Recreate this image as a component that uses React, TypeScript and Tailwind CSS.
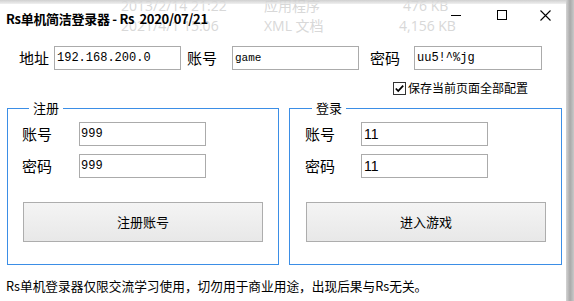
import React from "react";

function Box({ w, children, cls }: { w: string; children: React.ReactNode; cls: string }) {
  return (
    <div className={`${w} h-[24px] border border-[#ababab] bg-white flex items-center pl-[2px] text-black ${cls}`}>
      {children}
    </div>
  );
}

function Group({
  title,
  width,
  labelPl,
  inputMl,
  user,
  pass,
  valueCls,
  button,
}: {
  title: string;
  width: string;
  labelPl: string;
  inputMl: string;
  user: string;
  pass: string;
  valueCls: string;
  button: string;
}) {
  return (
    <fieldset className={`${width} h-[165px] border border-[#3b8ee6] ${labelPl} pb-[22px]`}>
      <legend className="ml-[7px] px-[4px] text-[13px] leading-[16px] text-black">{title}</legend>
      <div className="flex flex-col">
        <div className="mt-[6px] flex items-center h-[24px]">
          <span className="w-[57px] text-[15px] leading-[24px]">账号</span>
          <div className={`${inputMl} w-[127px] h-[24px] border border-[#ababab] bg-white flex items-center pl-[1px] ${valueCls}`}>{user}</div>
        </div>
        <div className="mt-[8px] flex items-center h-[24px]">
          <span className="w-[57px] text-[15px] leading-[24px]">密码</span>
          <div className={`${inputMl} w-[127px] h-[24px] border border-[#ababab] bg-white flex items-center pl-[1px] ${valueCls}`}>{pass}</div>
        </div>
        <div className="mt-[24px] ml-[1px] w-[240px] h-[40px] border border-[#adadad] bg-gradient-to-b from-[#f4f4f4] to-[#e8e8e8] flex items-center justify-center text-[13px] text-black">
          {button}
        </div>
      </div>
    </fieldset>
  );
}

export default function App() {
  return (
    <div className="relative w-[574px] h-[301px] overflow-hidden bg-white flex font-['Noto_Sans_CJK_SC','Noto_Sans',sans-serif] text-black">
      {/* ghost text from the window behind */}
      <div className="absolute left-0 top-0 w-[566px] h-[40px] font-['Open_Sans','Noto_Sans_CJK_SC',sans-serif] text-[14px] leading-[18px] text-[#d8d8d8]">
        <div className="absolute left-[121px] top-[-3px]">2013/2/14 21:22</div>
        <div className="absolute left-[264px] top-[-3px]">应用程序</div>
        <div className="absolute left-[403px] top-[-3px]">476 KB</div>
        <div className="absolute left-[121px] top-[17px]">2021/4/1 15:06</div>
        <div className="absolute left-[264px] top-[17px]">XML 文档</div>
        <div className="absolute left-[399px] top-[17px]">4,156 KB</div>
      </div>
      <div className="absolute left-0 top-0 w-[574px] h-[4px] bg-gradient-to-b from-[#c4c4c4] to-[#ececec] opacity-80" />

      <div className="relative w-[566px] h-full flex flex-col">
        {/* title bar */}
        <div className="h-[32px] flex items-start">
          <div className="pl-[6px] pt-[11px] text-[13px] leading-[16px] font-bold whitespace-pre tracking-[-0.3px]">
            Rs单机简洁登录器 - Rs  2020/07/21
          </div>
          <div className="ml-auto flex h-[30px]">
            <div className="w-[46px] h-[30px] flex items-center justify-center">
              <svg width="10" height="10" viewBox="0 0 10 10">
                <line x1="0" y1="5.5" x2="10" y2="5.5" stroke="#000" strokeWidth="1" />
              </svg>
            </div>
            <div className="w-[45px] h-[30px] flex items-center justify-center">
              <svg width="10" height="10" viewBox="0 0 10 10">
                <rect x="0.5" y="0.5" width="9" height="9" fill="none" stroke="#000" strokeWidth="1" />
              </svg>
            </div>
            <div className="w-[42px] h-[30px] flex items-center justify-center">
              <svg width="11" height="11" viewBox="0 0 11 11">
                <path d="M0.5 0.5 L10.5 10.5 M10.5 0.5 L0.5 10.5" stroke="#000" strokeWidth="1.1" fill="none" />
              </svg>
            </div>
          </div>
        </div>

        {/* row 1 */}
        <div className="mt-[14px] flex items-center h-[24px] pl-[19px]">
          <span className="w-[35px] text-[15px] leading-[24px]">地址</span>
          <Box w="w-[127px]" cls="font-['Liberation_Mono',monospace] text-[12px]">192.168.200.0</Box>
          <span className="ml-[6px] w-[45px] text-[15px] leading-[24px]">账号</span>
          <Box w="w-[127px]" cls="font-['Liberation_Mono',monospace] text-[11px]">game</Box>
          <span className="ml-[11px] w-[44px] text-[15px] leading-[24px]">密码</span>
          <Box w="w-[128px]" cls="font-['Liberation_Mono',monospace] text-[12px]">uu5!^%jg</Box>
        </div>

        {/* row 2 checkbox */}
        <div className="mt-[11px] h-[14px] flex items-center pl-[393px]">
          <svg width="13" height="13" viewBox="0 0 13 13">
            <rect x="0.5" y="0.5" width="12" height="12" fill="#fff" stroke="#333" strokeWidth="1" />
            <path d="M2.8 6.5 L5.2 9 L10.2 3.6" stroke="#000" strokeWidth="1.8" fill="none" />
          </svg>
          <span className="ml-[2px] text-[12px] leading-[14px] whitespace-nowrap">保存当前页面全部配置</span>
        </div>

        {/* groups */}
        <div className="mt-[5px] flex pl-[7px] gap-[10px]">
          <Group
            title="注册"
            width="w-[272px]"
            labelPl="pl-[14px]"
            inputMl="ml-0"
            user="999"
            pass="999"
            valueCls="font-['Liberation_Mono',monospace] text-[12px]"
            button="注册账号"
          />
          <Group
            title="登录"
            width="w-[273px]"
            labelPl="pl-[15px]"
            inputMl="ml-[-1px]"
            user="11"
            pass="11"
            valueCls="font-['Liberation_Sans',sans-serif] text-[14px] pl-[2px]"
            button="进入游戏"
          />
        </div>

        {/* footer */}
        <div className="mt-[11px] pl-[6px] h-[20px] text-[12.7px] leading-[20px] whitespace-nowrap">
          Rs单机登录器仅限交流学习使用，切勿用于商业用途，出现后果与Rs无关。
        </div>
      </div>

      {/* right shadow strip */}
      <div className="relative w-[8px] h-full bg-gradient-to-r from-[#d4d4d4] via-[#a9a9a9] to-[#c9c9c9]" />
    </div>
  );
}
